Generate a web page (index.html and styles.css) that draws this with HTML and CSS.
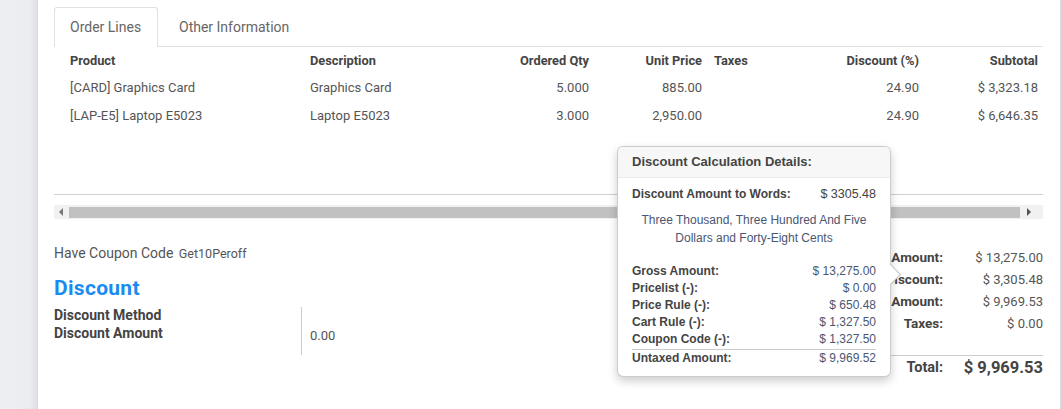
FILE: index.html
```html
<!DOCTYPE html>
<html>
<head>
<meta charset="utf-8">
<link rel="stylesheet" href="styles.css">
</head>
<body>
<div class="page">
  <div class="sidebar"></div>
  <div class="sheet">
    <div class="tabs">
      <div class="tab active">Order Lines</div>
      <div class="tab">Other Information</div>
    </div>
    <div class="table-wrap">
      <table class="lines">
        <colgroup>
          <col class="c1"><col class="c2"><col class="c3"><col class="c4"><col class="c5"><col class="c6"><col class="c7">
        </colgroup>
        <thead>
          <tr>
            <th class="l first">Product</th>
            <th class="l first">Description</th>
            <th class="r">Ordered Qty</th>
            <th class="r">Unit Price</th>
            <th class="l">Taxes</th>
            <th class="r">Discount (%)</th>
            <th class="r">Subtotal</th>
          </tr>
        </thead>
        <tbody>
          <tr>
            <td class="l first">[CARD] Graphics Card</td>
            <td class="l first">Graphics Card</td>
            <td class="r">5.000</td>
            <td class="r">885.00</td>
            <td class="l"></td>
            <td class="r">24.90</td>
            <td class="r">$ 3,323.18</td>
          </tr>
          <tr>
            <td class="l first">[LAP-E5] Laptop E5023</td>
            <td class="l first">Laptop E5023</td>
            <td class="r">3.000</td>
            <td class="r">2,950.00</td>
            <td class="l"></td>
            <td class="r">24.90</td>
            <td class="r">$ 6,646.35</td>
          </tr>
        </tbody>
      </table>
    </div>
    <div class="hscroll">
      <span class="arrow left"></span>
      <span class="thumb"></span>
      <span class="arrow right"></span>
    </div>
    <div class="bottom">
      <div class="left-col">
        <div class="coupon">Have Coupon Code <span class="code">Get10Peroff</span></div>
        <h2 class="disc-title">Discount</h2>
        <div class="fields">
          <div class="labels">
            <div>Discount Method</div>
            <div>Discount Amount</div>
          </div>
          <div class="vals">0.00</div>
        </div>
      </div>
      <div class="totals">
        <div class="t-label">Gross Amount:</div><div class="t-val">$ 13,275.00</div>
        <div class="t-label">Discount:</div><div class="t-val">$ 3,305.48</div>
        <div class="t-label">Untaxed Amount:</div><div class="t-val">$ 9,969.53</div>
        <div class="t-label">Taxes:</div><div class="t-val">$ 0.00</div>
        <div class="t-sep"></div>
        <div class="t-label total">Total:</div><div class="t-val total">$ 9,969.53</div>
      </div>
    </div>
  </div>
</div>

<div class="popover">
  <div class="pop-arrow"></div>
  <div class="pop-head">Discount Calculation Details:</div>
  <div class="pop-body">
    <div class="prow"><span class="pl">Discount Amount to Words:</span><span class="pv">$ 3305.48</span></div>
    <div class="words">Three Thousand, Three Hundred And Five<br>Dollars and Forty-Eight Cents</div>
    <div class="plist">
      <div class="prow"><span class="pl">Gross Amount:</span><span class="pv">$ 13,275.00</span></div>
      <div class="prow"><span class="pl">Pricelist (-):</span><span class="pv">$ 0.00</span></div>
      <div class="prow"><span class="pl">Price Rule (-):</span><span class="pv">$ 650.48</span></div>
      <div class="prow"><span class="pl">Cart Rule (-):</span><span class="pv">$ 1,327.50</span></div>
      <div class="prow"><span class="pl">Coupon Code (-):</span><span class="pv">$ 1,327.50</span></div>
      <div class="prow sum"><span class="pl">Untaxed Amount:</span><span class="pv">$ 9,969.52</span></div>
    </div>
  </div>
</div>
</body>
</html>
```

FILE: styles.css
```css
html, body {
  margin: 0;
  padding: 0;
}
body {
  width: 1061px;
  height: 409px;
  overflow: hidden;
  font-family: Roboto, "Liberation Sans", sans-serif;
  font-size: 13px;
  color: #555;
  background: #fff;
  position: relative;
}
.page {
  display: flex;
  height: 409px;
}
.sidebar {
  width: 37px;
  background: linear-gradient(to right, #eeeff2 0%, #ebecf0 80%, #dfe0e6 100%);
  border-right: 1px solid #d8d9e0;
}
.sheet {
  flex: 1;
  background: #fff;
  padding: 7px 17px 0 16px;
  border-right: 1px solid #dcdce6;
}
.tabs {
  display: flex;
  height: 39px;
  border-bottom: 1px solid #dee2e6;
}
.tab {
  height: 40px;
  line-height: 38px;
  padding: 0 15px 0 15px;
  color: #666;
  font-size: 14px;
  border: 1px solid transparent;
  border-bottom: none;
  box-sizing: border-box;
}
.tab + .tab {
  padding-left: 20px;
}
.tab.active {
  border-color: #dee2e6;
  border-radius: 3px 3px 0 0;
  background: #fff;
  width: 104px;
}
.table-wrap {
  height: 147px;
  border-bottom: 1px solid #cfcfcf;
}
.lines {
  width: 989px;
  table-layout: fixed;
  border-collapse: collapse;
}
.c1 { width: 240px; }
.c2 { width: 186px; }
.c3 { width: 115px; }
.c4 { width: 113px; }
.c5 { width: 92px; }
.c6 { width: 125px; }
.c7 { width: 118px; }
.lines th {
  height: 26px;
  font-weight: 700;
  font-size: 12.8px;
  color: #444;
  padding: 0 6px;
}
.lines td {
  height: 28px;
  padding: 0 6px;
  color: #555;
}
.lines .l { text-align: left; }
.lines .r { text-align: right; }
.lines .first { padding-left: 16px; }
.lines th:last-child, .lines td:last-child { padding-right: 5px; }

.hscroll {
  margin-top: 10px;
  width: 989px;
  height: 14px;
  background: #f1f1f1;
  display: flex;
  align-items: center;
}
.thumb {
  flex: 1;
  height: 11px;
  background: #c1c1c1;
  margin: 0 2px;
}
.arrow {
  width: 13px;
  height: 14px;
  position: relative;
  display: block;
}
.arrow::after {
  content: "";
  position: absolute;
  top: 3px;
  border-top: 4px solid transparent;
  border-bottom: 4px solid transparent;
}
.arrow.left::after {
  left: 5px;
  border-right: 4px solid #777;
}
.arrow.right::after {
  left: 5px;
  border-left: 4px solid #555;
}
.arrow.right { width: 21px; }

.bottom {
  display: flex;
  margin-top: 24px;
  width: 989px;
}
.left-col {
  flex: 1;
}
.coupon {
  line-height: 20px;
  color: #555;
  font-size: 14px;
}
.code {
  font-size: 12.5px;
  margin-left: 2px;
}
.disc-title {
  margin: 11px 0 0;
  font-size: 21px;
  line-height: 26px;
  font-weight: 700;
  letter-spacing: 0.3px;
  color: #1a8cf1;
}
.fields {
  display: flex;
  margin-top: 5px;
}
.labels {
  width: 247px;
  font-weight: 700;
  font-size: 14px;
  color: #444;
  line-height: 18px;
  height: 48px;
}
.vals {
  border-left: 1px solid #ccc;
  padding: 20px 0 0 8px;
  line-height: 18px;
  height: 28px;
  margin-top: 1px;
  color: #555;
}
.totals {
  width: 250px;
  padding-top: 3px;
  display: grid;
  grid-template-columns: 1fr 100px;
  grid-auto-rows: 22px;
  align-items: center;
}
.t-label {
  text-align: right;
  font-weight: 700;
  font-size: 13.5px;
  color: #444;
}
.t-val {
  text-align: right;
  color: #555;
}
.t-sep {
  grid-column: 1 / 3;
  border-top: 1px solid #ccc;
  height: 0;
  align-self: end;
  margin-top: 3px;
}
.t-label.total {
  font-size: 14.5px;
}
.t-val.total {
  font-size: 16.5px;
  font-weight: 700;
  color: #444;
}

.popover {
  position: absolute;
  left: 617px;
  top: 146px;
  width: 274px;
  height: 231px;
  box-sizing: border-box;
  border: 1px solid rgba(0,0,0,0.2);
  border-radius: 6px;
  background: #fff;
  box-shadow: 0 4px 10px rgba(0,0,0,0.2);
  font-family: "Liberation Sans", Arial, sans-serif;
  font-size: 12px;
  color: #444;
}
.pop-arrow {
  position: absolute;
  right: -8px;
  top: 120px;
  width: 14px;
  height: 14px;
  background: #fff;
  border-top: 1px solid rgba(0,0,0,0.25);
  border-right: 1px solid rgba(0,0,0,0.25);
  transform: rotate(45deg);
}
.pop-head {
  height: 30px;
  line-height: 30px;
  padding: 0 14px;
  background: #f7f7f7;
  border-bottom: 1px solid #ebebeb;
  border-radius: 5px 5px 0 0;
  font-weight: 700;
  font-size: 13px;
  color: #444;
}
.pop-body {
  padding: 8px 14px 0;
}
.prow {
  display: flex;
  justify-content: space-between;
  line-height: 17px;
}
.pl {
  font-weight: 700;
  color: #444;
}
.pv {
  color: #4a5672;
}
.pop-body > .prow .pv {
  font-size: 12.5px;
  color: #444;
}
.words {
  margin-top: 8px;
  text-align: center;
  line-height: 18px;
  color: #4a5672;
}
.plist {
  margin-top: 16px;
}
.prow.sum {
  border-top: 1px solid #ccc;
  margin-top: 1px;
}
```
